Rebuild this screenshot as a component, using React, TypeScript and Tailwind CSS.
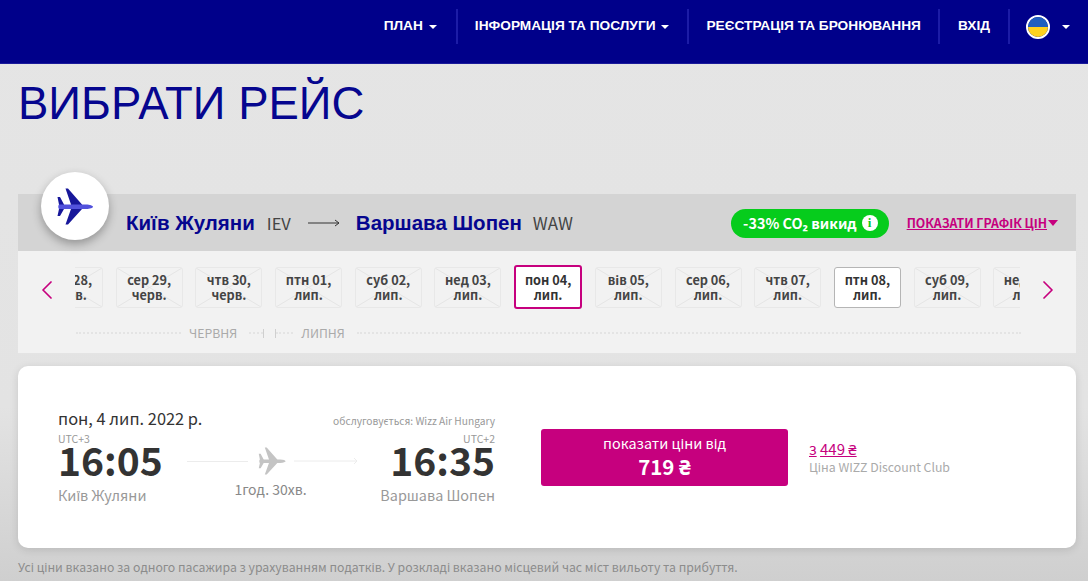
import { ChevronLeft, ChevronRight } from "lucide-react";

const chips = [
  { a: "чер 28,", b: "черв." },
  { a: "сер 29,", b: "черв." },
  { a: "чтв 30,", b: "черв." },
  { a: "птн 01,", b: "лип." },
  { a: "суб 02,", b: "лип." },
  { a: "нед 03,", b: "лип." },
  { a: "пон 04,", b: "лип.", state: "selected" },
  { a: "вів 05,", b: "лип." },
  { a: "сер 06,", b: "лип." },
  { a: "чтв 07,", b: "лип." },
  { a: "птн 08,", b: "лип.", state: "open" },
  { a: "суб 09,", b: "лип." },
  { a: "нед 10,", b: "лип." },
];

const Caret = ({ className }: { className: string }) => (
  <span className={`inline-block h-0 w-0 border-x-[4px] border-t-[4px] border-x-transparent ${className}`} />
);

const Plane = ({ wing, body, className }: { wing: string; body: string; className: string }) => (
  <svg viewBox="0 0 36 37" className={className}>
    <path fill={wing} d="M8.500 0.500L11 0.500L25 16.500V21L11 36.500H8.500L14 21V16.500z" />
    <path fill={wing} d="M0.500 9H3L7 16.500V21L3 28H0.500L2 21V16.500z" />
    <path fill={body} d="M2 16.500H29C33 16.500 36 17.800 36 18.800C36 19.800 33 21 29 21H2C1 20 1 17.500 2 16.500z" />
  </svg>
);

const Dots = ({ className }: { className: string }) => (
  <span className={`h-0 border-t-2 border-dotted border-[#e4e4e4] ${className}`} />
);

const DateChip = ({ a, b, state }: { a: string; b: string; state?: string }) => {
  if (state === "selected") {
    return (
      <div className="flex h-[44px] w-[68px] shrink-0 flex-col items-center justify-center rounded-[3px] border-2 border-[#c6007e] bg-white text-[12.7px] leading-[15px] font-bold text-[#333]">
        <span>{a}</span>
        <span>{b}</span>
      </div>
    );
  }
  if (state === "open") {
    return (
      <div className="flex h-[41px] w-[67px] shrink-0 flex-col items-center justify-center rounded-[3px] border border-[#b5b5b5] bg-white text-[12.7px] leading-[15px] font-bold text-[#333]">
        <span>{a}</span>
        <span>{b}</span>
      </div>
    );
  }
  return (
    <div className="relative flex h-[41px] w-[67px] shrink-0 flex-col items-center justify-center overflow-hidden rounded-[3px] border border-[#e8e8e8] text-[12.7px] leading-[15px] font-bold text-[#444]">
      <svg viewBox="0 0 67 41" preserveAspectRatio="none" className="absolute inset-0 h-full w-full">
        <path d="M0 0L67 41M67 0L0 41" stroke="#e4e4e4" strokeWidth="1" />
      </svg>
      <span className="relative">{a}</span>
      <span className="relative">{b}</span>
    </div>
  );
};

export default function App() {
  return (
    <div className="h-[581px] overflow-hidden bg-[linear-gradient(#e5e5e5_0%,#e3e3e3_70%,#cfcfcf_100%)] font-['Noto_Sans_CJK_SC','Noto_Sans',sans-serif]">
      <header className="flex h-[64px] items-start justify-end border-b border-[#1a1a9a] bg-[#00008a] font-['Liberation_Sans',sans-serif] text-[13.7px] font-bold text-white">
        <nav className="flex h-[44px] items-center pt-[9px]">
          <div className="flex h-[35px] items-center gap-[6px] border-r-2 border-[#1c1ca6] pr-[19px]">
            ПЛАН <Caret className="border-t-white" />
          </div>
          <div className="flex h-[35px] items-center gap-[6px] border-r-2 border-[#1c1ca6] pr-[18px] pl-[17px]">
            ІНФОРМАЦІЯ ТА ПОСЛУГИ <Caret className="border-t-white" />
          </div>
          <div className="flex h-[35px] items-center border-r-2 border-[#1c1ca6] pr-[17px] pl-[17px]">
            РЕЄСТРАЦІЯ ТА БРОНЮВАННЯ
          </div>
          <div className="flex h-[35px] items-center border-r-2 border-[#1c1ca6] pr-[18px] pl-[18px]">ВХІД</div>
          <div className="flex h-[35px] items-center gap-[12px] pr-[18px] pl-[16px]">
            <span className="flex h-[24px] w-[24px] flex-col overflow-hidden rounded-full border-2 border-white">
              <span className="h-1/2 bg-[#1f5fc0]" />
              <span className="h-1/2 bg-[#ffd21f]" />
            </span>
            <Caret className="border-t-white" />
          </div>
        </nav>
      </header>

      <main className="pr-[12px] pl-[18px]">
        <h1 className="pt-[9px] font-['Liberation_Sans',sans-serif] text-[45.5px] leading-[62px] text-[#06068f]">
          ВИБРАТИ РЕЙС
        </h1>

        <section className="relative mt-[59px] flex h-[57px] items-center justify-between bg-[#d4d4d4] pt-[1px] pr-[18px] pl-[108px]">
          <div className="absolute top-[-22px] left-[23px] flex h-[68px] w-[68px] items-center justify-center rounded-full bg-white shadow-[0_4px_10px_rgba(0,0,0,0.3)]">
            <Plane wing="#17179a" body="#5252dc" className="h-[37px] w-[36px]" />
          </div>
          <div className="flex items-center">
            <span className="font-['Liberation_Sans',sans-serif] text-[20.5px] font-bold text-[#06068f]">Київ Жуляни</span>
            <span className="ml-[12px] text-[16.500px] text-[#444]">IEV</span>
            <svg viewBox="0 0 32 10" className="mr-[16px] ml-[17px] h-[10px] w-[32px]">
              <path d="M0 5H31M27 2l4 3-4 3" fill="none" stroke="#333" strokeWidth="1" />
            </svg>
            <span className="font-['Liberation_Sans',sans-serif] text-[20.5px] font-bold text-[#06068f]">Варшава Шопен</span>
            <span className="ml-[11px] text-[17px] text-[#444]">WAW</span>
          </div>
          <div className="flex items-center">
            <div className="flex h-[29px] items-center gap-[5px] rounded-full bg-[#06cc1c] pr-[11px] pl-[12px] text-[14.4px] font-bold text-white">
              <span>-33% CO₂ викид</span>
              <span className="flex h-[16px] w-[16px] items-center justify-center rounded-full bg-white font-['Liberation_Serif',serif] text-[13px] font-bold text-[#06cc1c]">
                i
              </span>
            </div>
            <div className="ml-[18px] flex items-center gap-[1px] text-[12.3px] font-bold text-[#c6007e]">
              <span className="underline">ПОКАЗАТИ ГРАФІК ЦІН</span>
              <span className="h-0 w-0 border-x-[5px] border-t-[6px] border-x-transparent border-t-[#c6007e]" />
            </div>
          </div>
        </section>

        <section className="h-[103px] border-b border-[#e4e4e4] bg-[#f2f2f2]">
          <div className="flex h-[72px] items-center">
            <ChevronLeft className="mt-[6px] ml-[13px] h-[32px] w-[32px] shrink-0 text-[#c6007e]" strokeWidth={1.3} />
            <div className="ml-[12px] w-[945px] overflow-hidden">
              <div className="ml-[-39px] flex items-center gap-[12.7px]">
                {chips.map((c) => (
                  <DateChip key={c.a} {...c} />
                ))}
              </div>
            </div>
            <ChevronRight className="mt-[6px] ml-[12px] h-[32px] w-[32px] shrink-0 text-[#c6007e]" strokeWidth={1.3} />
          </div>
          <div className="ml-[58px] flex h-[20px] w-[945px] items-center text-[12.3px] text-[#aaa]">
            <Dots className="w-[105px]" />
            <span className="ml-[8px]">ЧЕРВНЯ</span>
            <Dots className="ml-[12px] w-[14px]" />
            <span className="h-[9px] w-px bg-[#cfcfcf]" />
            <span className="ml-[11px] h-[9px] w-px bg-[#cfcfcf]" />
            <Dots className="w-[17px]" />
            <span className="ml-[8px]">ЛИПНЯ</span>
            <Dots className="ml-[12px] w-[664px]" />
          </div>
        </section>

        <section className="mt-[12px] flex h-[182px] items-start rounded-[10px] bg-white pt-[41px] pl-[40px] shadow-[0_2px_8px_rgba(0,0,0,0.12)]">
          <div className="w-[437px]">
            <div className="flex items-baseline justify-between">
              <span className="text-[16.4px] leading-[23px] text-[#333]">пон, 4 лип. 2022 р.</span>
              <span className="text-[10.2px] text-[#999]">обслуговується: Wizz Air Hungary</span>
            </div>
            <div className="flex items-start justify-between pt-[3px]">
              <div className="flex flex-col">
                <span className="text-[10.5px] leading-[11px] text-[#999]">UTC+3</span>
                <span className="text-[39px] leading-[31px] font-bold text-[#333]">16:05</span>
                <span className="mt-[10px] text-[14.4px] leading-[20px] text-[#999]">Київ Жуляни</span>
              </div>
              <div className="ml-[1px] flex flex-col items-center pt-[14px]">
                <div className="flex items-center">
                  <span className="h-px w-[61px] bg-[#ececec]" />
                  <Plane wing="#c4c4c4" body="#c4c4c4" className="mr-[8px] ml-[10px] h-[28px] w-[28px]" />
                  <svg viewBox="0 0 64 8" className="h-[8px] w-[64px]">
                    <path d="M0 4H63M60 1l3 3-3 3" fill="none" stroke="#ececec" strokeWidth="1" />
                  </svg>
                </div>
                <span className="mt-[4px] pr-[3px] text-[14px] leading-[20px] text-[#888]">1год. 30хв.</span>
              </div>
              <div className="flex flex-col items-end">
                <span className="text-[10.5px] leading-[11px] text-[#999]">UTC+2</span>
                <span className="text-[39px] leading-[31px] font-bold text-[#333]">16:35</span>
                <span className="mt-[10px] text-[14.4px] leading-[20px] text-[#999]">Варшава Шопен</span>
              </div>
            </div>
          </div>
          <div className="mt-[22px] ml-[46px] flex h-[57px] w-[247px] flex-col items-center justify-center rounded-[3px] bg-[#c6007e] pb-[3px] text-white">
            <span className="text-[14.4px] leading-[20px]">показати ціни від</span>
            <span className="text-[20.5px] leading-[27px] font-bold">719 ₴</span>
          </div>
          <div className="mt-[33px] ml-[21px] flex flex-col text-[12.3px] leading-[18px]">
            <span className="text-[15px] text-[#c6007e]">
              <span className="underline">з</span> <span className="underline">449 ₴</span>
            </span>
            <span className="text-[#aaa]">Ціна WIZZ Discount Club</span>
          </div>
        </section>

        <p className="mt-[10px] text-[12.25px] leading-[18px] text-[#8c8c8c]">
          Усі ціни вказано за одного пасажира з урахуванням податків. У розкладі вказано місцевий час міст вильоту та прибуття.
        </p>
      </main>
    </div>
  );
}
